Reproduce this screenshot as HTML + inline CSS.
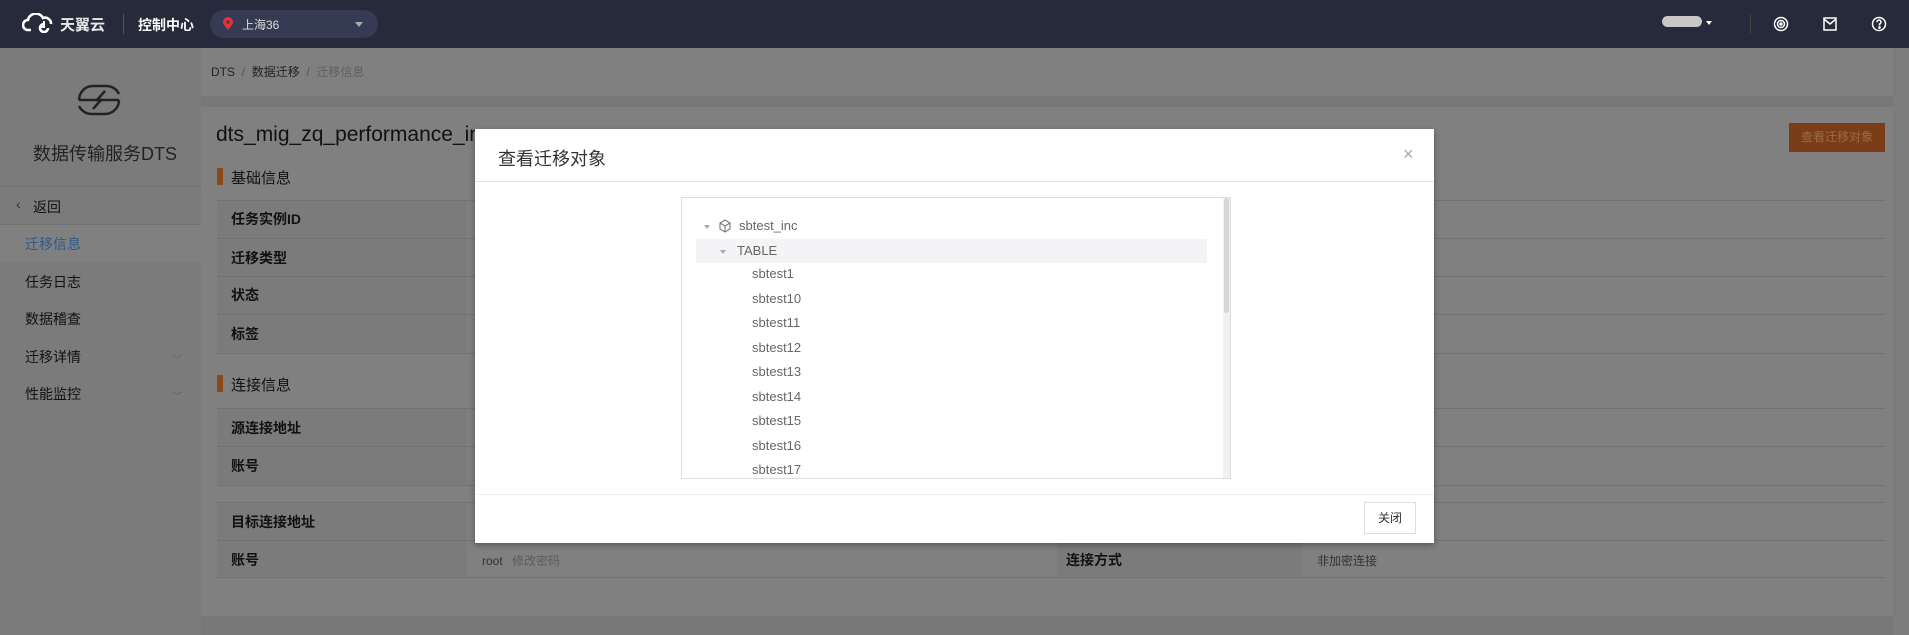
<!DOCTYPE html>
<html style="background:#808080"><head><meta charset="utf-8"><style>
*{margin:0;padding:0;box-sizing:border-box}
body{width:1909px;height:635px;overflow:hidden;position:relative;background:#808080;font-family:"Liberation Sans","Noto Sans CJK SC",sans-serif;font-size:14px;color:#1a1a1a}
.abs{position:absolute}
.hdr{left:0;top:0;width:1909px;height:48px;background:#262a3a;color:#fff}
.side{left:0;top:48px;width:201px;height:587px;background:#7b7b7b}
.side .it{position:absolute;left:25px;font-size:14px;color:#111}
.line{position:absolute;height:1px;background:#727272}
.lab{position:absolute;left:231px;font-size:14px;font-weight:bold;color:#111}
.lcell{position:absolute;left:217px;width:250px;background:#7b7b7b}
.modal{left:475px;top:129px;width:959px;height:414px;background:#fff;box-shadow:0 2px 6px rgba(0,0,0,.35)}
</style></head><body>
<div class="abs" style="left:0;top:0;width:1909px;height:635px;background:#808080"></div>
<div class="abs hdr">
 <svg class="abs" style="left:22px;top:13px" width="34" height="20" viewBox="0 0 34 20"><path d="M9 17 H6 a5 5 0 0 1 0-10 a8 8 0 0 1 15-2 a6 6 0 0 1 8 6" fill="none" stroke="#fff" stroke-width="2.6"/><path d="M22 11 a4 4 0 1 0 4 4" fill="none" stroke="#fff" stroke-width="2.6"/><path d="M22 8 v6 h-4" fill="none" stroke="#fff" stroke-width="2"/></svg>
 <div class="abs" style="left:60px;top:14px;font-size:15px;font-weight:bold;color:#e8e8e8">天翼云</div>
 <div class="abs" style="left:123px;top:14px;width:1px;height:20px;background:#555"></div>
 <div class="abs" style="left:138px;top:15px;font-size:14px;font-weight:bold">控制中心</div>
 <div class="abs" style="left:210px;top:10px;width:168px;height:28px;border-radius:14px;background:#343b53">
  <svg class="abs" style="left:13px;top:7px" width="10" height="13" viewBox="0 0 10 13"><path d="M5 13 C1 8 0 6.5 0 5 a5 5 0 0 1 10 0 c0 1.5-1 3-5 8z" fill="#e8303c"/><circle cx="5" cy="5" r="1.6" fill="#343b53"/></svg>
  <div class="abs" style="left:32px;top:6px;font-size:12px;color:#ddd">上海36</div>
  <div class="abs" style="left:145px;top:12px;border:4px solid transparent;border-top:5px solid #aaa"></div>
 </div>
 <div class="abs" style="left:1662px;top:16px;width:40px;height:11px;border-radius:6px;background:#c8c8c8"></div>
 <div class="abs" style="left:1706px;top:21px;border:3px solid transparent;border-top:4px solid #fff"></div>
 <div class="abs" style="left:1750px;top:14px;width:1px;height:20px;background:#444"></div>
 <svg class="abs" style="left:1773px;top:16px" width="16" height="16" viewBox="0 0 16 16" fill="none" stroke="#fff" stroke-width="1.5"><circle cx="8" cy="8" r="6.5"/><circle cx="8" cy="8" r="3.5"/><circle cx="8" cy="8" r="1" fill="#fff"/></svg>
 <svg class="abs" style="left:1823px;top:17px" width="14" height="14" viewBox="0 0 14 14" fill="none" stroke="#fff" stroke-width="1.5"><rect x="1" y="1" width="12" height="12"/><path d="M1 2 L7 7 L13 2"/></svg>
 <svg class="abs" style="left:1871px;top:16px" width="16" height="16" viewBox="0 0 16 16" fill="none" stroke="#fff" stroke-width="1.5"><circle cx="8" cy="8" r="6.5"/><path d="M6 6.2 a2 2 0 1 1 2.5 1.8 v1.5"/><circle cx="8.5" cy="11.5" r=".6" fill="#fff"/></svg>
</div>

<div class="abs side">
 <svg class="abs" style="left:75px;top:36px" width="48" height="32" viewBox="0 0 48 32" fill="none" stroke="#222" stroke-width="2.5" stroke-linejoin="round"><path d="M4 16 A14 14 0 0 1 18 2 H32 A14 14 0 0 1 44 10"/><path d="M44 16 A14 14 0 0 1 30 30 H16 A14 14 0 0 1 4 22"/><path d="M4 16 H26 L18 25"/><path d="M44 16 H22 L30 7"/></svg>
 <div class="abs" style="left:33px;top:92px;font-size:18px;color:#222">数据传输服务DTS</div>
 <div class="line" style="left:0;top:138px;width:201px"></div>
 <div class="it" style="left:16px;top:148px;color:#333">‹</div>
 <div class="it" style="left:33px;top:149px">返回</div>
 <div class="line" style="left:0;top:176px;width:201px"></div>
 <div class="abs" style="left:0;top:177px;width:201px;height:37px;background:#808080"></div>
 <div class="it" style="left:25px;top:186px;color:#2e5a8c">迁移信息</div>
 <div class="it" style="top:224px">任务日志</div>
 <div class="it" style="top:261px">数据稽查</div>
 <div class="it" style="top:299px">迁移详情</div>
 <div class="it" style="top:336px">性能监控</div>
 <div class="abs" style="left:172px;top:303px;font-size:11px;color:#666">﹀</div>
 <div class="abs" style="left:172px;top:340px;font-size:11px;color:#666">﹀</div>
</div>

<div class="abs" style="left:211px;top:63px;font-size:12px;color:#222">DTS <span style="color:#555">&nbsp;/&nbsp;</span> 数据迁移 <span style="color:#555">&nbsp;/&nbsp;</span> <span style="color:#606060">迁移信息</span></div>
<div class="abs" style="left:201px;top:96px;width:1708px;height:11px;background:#787878"></div>
<div class="abs" style="left:201px;top:616px;width:1708px;height:19px;background:#787878"></div>
<div class="abs" style="left:1893px;top:48px;width:16px;height:587px;background:#7c7c7c"></div>
<div class="abs" style="left:216px;top:123px;font-size:21px;color:#111">dts_mig_zq_performance_inc_</div>
<div class="abs" style="left:1789px;top:123px;width:96px;height:29px;background:#7a3d17;color:#9a6a4c;font-size:12px;text-align:center;line-height:29px">查看迁移对象</div>

<div class="abs" style="left:217px;top:168px;width:6px;height:17px;background:#8a4819"></div>
<div class="abs" style="left:231px;top:167px;font-size:15px;color:#111">基础信息</div>
<div class="abs" style="left:217px;top:375px;width:6px;height:17px;background:#8a4819"></div>
<div class="abs" style="left:231px;top:374px;font-size:15px;color:#111">连接信息</div>

<div class="lcell" style="top:200px;height:153px"></div>
<div class="lcell" style="top:408px;height:77px"></div>
<div class="lcell" style="top:502px;height:76px"></div>
<div class="abs" style="left:1057px;top:541px;width:245px;height:37px;background:#7b7b7b"></div>
<div class="line" style="left:217px;top:200px;width:1668px"></div>
<div class="line" style="left:217px;top:238px;width:1668px"></div>
<div class="line" style="left:217px;top:276px;width:1668px"></div>
<div class="line" style="left:217px;top:314px;width:1668px"></div>
<div class="line" style="left:217px;top:353px;width:1668px"></div>
<div class="line" style="left:217px;top:408px;width:1668px"></div>
<div class="line" style="left:217px;top:446px;width:1668px"></div>
<div class="line" style="left:217px;top:485px;width:1668px"></div>
<div class="line" style="left:217px;top:502px;width:1668px"></div>
<div class="line" style="left:217px;top:540px;width:1668px"></div>
<div class="line" style="left:217px;top:577px;width:1668px"></div>
<div class="lab" style="top:209px">任务实例ID</div>
<div class="lab" style="top:248px">迁移类型</div>
<div class="lab" style="top:285px">状态</div>
<div class="lab" style="top:324px">标签</div>
<div class="lab" style="top:418px">源连接地址</div>
<div class="lab" style="top:456px">账号</div>
<div class="lab" style="top:512px">目标连接地址</div>
<div class="lab" style="top:550px">账号</div>
<div class="abs" style="left:482px;top:552px;font-size:12px;color:#333">root <span style="color:#5c5c5c;margin-left:6px">修改密码</span></div>
<div class="lab" style="left:1066px;top:550px">连接方式</div>
<div class="abs" style="left:1317px;top:552px;font-size:12px;color:#333">非加密连接</div>

<div class="abs modal">
 <div class="abs" style="left:23px;top:16px;font-size:18px;color:#333">查看迁移对象</div>
 <div class="abs" style="left:928px;top:15px;font-size:18px;color:#aaa;font-weight:300">×</div>
 <div class="abs" style="left:0;top:52px;width:959px;height:1px;background:#e4e4e4"></div>
 <div class="abs" style="left:206px;top:68px;width:550px;height:282px;border:1px solid #ddd">
  <div class="abs" style="right:0;top:0;width:7px;height:280px;background:#f1f1f1"></div>
  <div class="abs" style="right:1px;top:0;width:5px;height:115px;background:#d6d6d6;border-radius:3px"></div>
  <div class="abs" style="left:14px;top:41px;width:511px;height:24px;background:#f4f4f6"></div>
  <div class="abs" style="left:22px;top:27px;border:3px solid transparent;border-top:4px solid #aaa"></div>
  <svg class="abs" style="left:37px;top:21px" width="12" height="14" viewBox="0 0 12 14" fill="none" stroke="#777" stroke-width="1.1"><path d="M6 1 L11 4 V10 L6 13 L1 10 V4Z M1 4 L6 7 L11 4 M6 7 V13"/></svg>
  <div class="abs" style="left:57px;top:20px;font-size:13px;color:#666">sbtest_inc</div>
  <div class="abs" style="left:38px;top:52px;border:3px solid transparent;border-top:4px solid #aaa"></div>
  <div class="abs" style="left:55px;top:45px;font-size:13px;color:#666">TABLE</div>
 </div>
 <div style="position:absolute;left:277px;top:133px;font-size:13px;color:#666;line-height:24.5px">sbtest1<br>sbtest10<br>sbtest11<br>sbtest12<br>sbtest13<br>sbtest14<br>sbtest15<br>sbtest16<br>sbtest17</div>
 <div class="abs" style="left:0;top:365px;width:959px;height:1px;background:#eee"></div>
 <div class="abs" style="left:889px;top:373px;width:52px;height:32px;border:1px solid #ddd;font-size:12px;color:#333;text-align:center;line-height:30px">关闭</div>
</div>
</body></html>
